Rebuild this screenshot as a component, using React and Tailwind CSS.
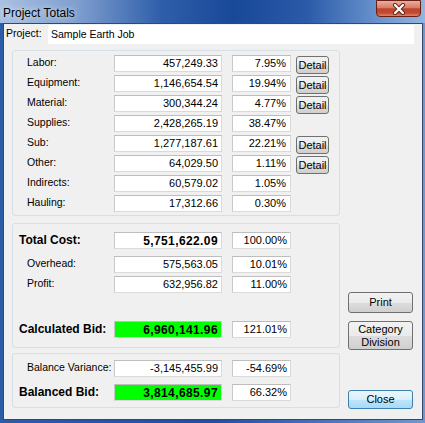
import React from 'react';

const font = { fontFamily: '"Liberation Sans", Arial, sans-serif' };

// one read-only text box (Win7 look)
const Box = ({ children, w = 'w-[108px]', bold, green }) => (
  <div
    className={`h-[17px] ${w} flex-none flex items-center justify-end pr-[3px] border border-[#dadada] border-t-[#bdbdbd] border-l-[#c9c9c9] ${
      green ? 'bg-[#00ff00]' : 'bg-white'
    } ${bold ? 'text-[12px] font-bold tracking-[0.4px]' : 'text-[11px]'} text-black leading-none`}
  >
    {children}
  </div>
);

const Btn = ({ children, className = '' }) => (
  <button
    className={`flex-none flex items-center justify-center text-center leading-[13px] text-[11px] text-black rounded-[3px] border border-[#707070] bg-[linear-gradient(#f2f2f2_0%,#ebebeb_50%,#dddddd_51%,#cfcfcf_100%)] ${className}`}
  >
    {children}
  </button>
);

const costRows = [
  ['Labor:', '457,249.33', '7.95%', true],
  ['Equipment:', '1,146,654.54', '19.94%', true],
  ['Material:', '300,344.24', '4.77%', true],
  ['Supplies:', '2,428,265.19', '38.47%', false],
  ['Sub:', '1,277,187.61', '22.21%', true],
  ['Other:', '64,029.50', '1.11%', true],
  ['Indirects:', '60,579.02', '1.05%', false],
  ['Hauling:', '17,312.66', '0.30%', false],
];

const Label = ({ children, bold, indent }) => (
  <div
    className={`w-[95px] flex-none ${indent ? 'pl-[8px]' : ''} ${
      bold ? 'text-[12px] font-bold' : 'text-[10.5px]'
    } text-black leading-none mt-[-2px]`}
  >
    {children}
  </div>
);

export default function App() {
  return (
    <div
      style={font}
      className="w-[425px] h-[423px] flex flex-col overflow-hidden bg-[linear-gradient(to_right,#2a5ca8,#1f4f9e_50%,#6f98d0)]"
    >
      {/* title bar */}
      <div className="h-[23px] flex-none flex items-start bg-[linear-gradient(to_right,#a9c1e2_0%,#7f9fcf_18%,#2f5ea9_38%,#184898_55%,#2a5aa8_72%,#6e97d0_90%,#93b5df_100%)]">
        <div className="pl-[3px] pt-[4px] text-[12px] text-black [text-shadow:0_0_6px_rgba(255,255,255,0.95)]">
          Project Totals
        </div>
        <div className="ml-auto mr-[4px] w-[45px] h-[17px] rounded-[4px] rounded-t-none border border-[#6b1f12] bg-[linear-gradient(#eaae9f_0%,#d77d69_45%,#c0432b_52%,#c34a32_80%,#dd866b_100%)] flex items-center justify-center">
          <svg width="14" height="12" viewBox="0 0 14 12">
            <path d="M3 2 L11 10 M11 2 L3 10" stroke="#5a2418" strokeWidth="4" strokeLinecap="round" />
            <path d="M3 2 L11 10 M11 2 L3 10" stroke="#ffffff" strokeWidth="2.2" strokeLinecap="round" />
          </svg>
        </div>
      </div>

      {/* client area */}
      <div className="ml-[3px] mr-[2px] mb-[3px] flex-1 border border-[#34496a] bg-[#f0f0f0] flex flex-col">
        {/* project row */}
        <div className="mt-[1px] flex h-[19px]">
          <div className="w-[44px] pl-[2px] pt-[3px] text-[10.5px] leading-none text-black">Project:</div>
          <div className="w-[366px] h-[19px] bg-white flex items-center pl-[3px] text-[10.5px] text-black">
            Sample Earth Job
          </div>
        </div>

        <div className="flex mt-[6px]">
          {/* groups */}
          <div className="ml-[8px] w-[328px] flex flex-col">
            <div className="h-[166px] border border-[#d5dfe5] rounded-[3px] pt-[4px] pl-[6px] flex flex-col gap-[3px]">
              {costRows.map(([label, value, pct, detail]) => (
                <div key={label} className="flex items-center h-[17px]">
                  <Label indent>{label}</Label>
                  <Box>{value}</Box>
                  <div className="w-[10px]" />
                  <Box w="w-[59px]">
                    <span className="pr-[1px]">{pct}</span>
                  </Box>
                  {detail && (
                    <Btn className="ml-[5px] w-[33px] h-[18px] self-start mt-[1px]">Detail</Btn>
                  )}
                </div>
              ))}
            </div>

            <div className="mt-[7px] h-[125px] border border-[#d5dfe5] rounded-[3px] pt-[8px] pl-[6px] flex flex-col">
              <div className="flex items-center h-[17px]">
                <Label bold>Total Cost:</Label>
                <Box bold>5,751,622.09</Box>
                <div className="w-[10px]" />
                <Box w="w-[59px]">100.00%</Box>
              </div>
              <div className="flex items-center h-[17px] mt-[7px]">
                <Label indent>Overhead:</Label>
                <Box>575,563.05</Box>
                <div className="w-[10px]" />
                <Box w="w-[59px]">10.01%</Box>
              </div>
              <div className="flex items-center h-[17px] mt-[3px]">
                <Label indent>Profit:</Label>
                <Box>632,956.82</Box>
                <div className="w-[10px]" />
                <Box w="w-[59px]">11.00%</Box>
              </div>
              <div className="flex items-center h-[17px] mt-[28px]">
                <Label bold>Calculated Bid:</Label>
                <Box bold green>6,960,141.96</Box>
                <div className="w-[10px]" />
                <Box w="w-[59px]">121.01%</Box>
              </div>
            </div>

            <div className="mt-[5px] h-[55px] border border-[#d5dfe5] rounded-[3px] pt-[6px] pl-[6px] flex flex-col">
              <div className="flex items-center h-[17px]">
                <Label indent>Balance Variance:</Label>
                <Box>-3,145,455.99</Box>
                <div className="w-[10px]" />
                <Box w="w-[59px]">-54.69%</Box>
              </div>
              <div className="flex items-center h-[17px] mt-[7px]">
                <Label bold>Balanced Bid:</Label>
                <Box bold green>3,814,685.97</Box>
                <div className="w-[10px]" />
                <Box w="w-[59px]">66.32%</Box>
              </div>
            </div>
          </div>

          {/* buttons */}
          <div className="ml-[8px] w-[65px] flex flex-col pt-[242px]">
            <Btn className="w-[65px] h-[21px]">Print</Btn>
            <Btn className="w-[65px] h-[29px] mt-[8px]">
              Category
              <br />
              Division
            </Btn>
            <button className="mt-[40px] w-[65px] h-[19px] flex items-center justify-center text-[11px] text-black rounded-[3px] border border-[#3c7fb1] bg-[linear-gradient(#eaf6fd_0%,#d9f0fc_50%,#bee6fd_51%,#a7d9f5_100%)]">
              Close
            </button>
          </div>
        </div>
      </div>
    </div>
  );
}
